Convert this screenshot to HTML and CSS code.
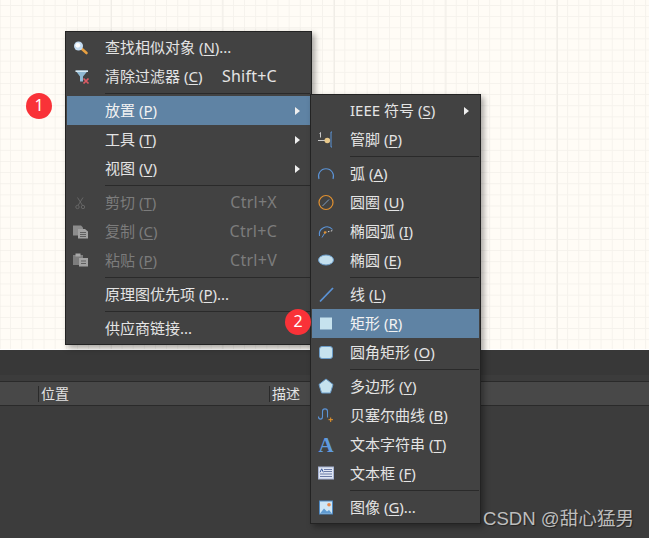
FILE: index.html
```html
<!DOCTYPE html>
<html lang="zh">
<head>
<meta charset="utf-8">
<title>Menu</title>
<link rel="stylesheet" href="styles.css">
</head>
<body>
<div class="app">
  <div class="canvas"></div>
  <div class="panel">
    <div class="panel-strip"></div>
    <div class="table-head">
      <div class="col col-a"></div>
      <div class="col col-b">位置</div>
      <div class="col col-c">描述</div>
    </div>
    <div class="table-body"></div>
  </div>

  <div class="menu menu-main">
    <div class="row">
      <span class="icon"><svg viewBox="0 0 20 20"><path d="M11 11l4.500 4" stroke="#e8a040" stroke-width="2.600" stroke-linecap="round"/><circle cx="7.500" cy="8" r="4.500" fill="#c4dcf2"/><circle cx="6.800" cy="7.300" r="2.400" fill="#fff"/></svg></span>
      <span class="label">查找相似对象 (<u>N</u>)...</span>
    </div>
    <div class="row">
      <span class="icon"><svg viewBox="0 0 20 20"><path d="M4.500 3.500h12.500l-5 6v5h-3v-5z" fill="#8fb8d2"/><path d="M4.500 3.500h12.500v1.500H4.500z" fill="#d9ebf5"/><path d="M12.500 11.500l5 5M17.500 11.500l-5 5" stroke="#dd5a64" stroke-width="1.700"/></svg></span>
      <span class="label">清除过滤器 (<u>C</u>)</span>
      <span class="keys">Shift+C</span>
    </div>
    <div class="sep"></div>
    <div class="row active">
      <span class="icon"></span>
      <span class="label">放置 (<u>P</u>)</span>
      <span class="arrow"></span>
    </div>
    <div class="row">
      <span class="icon"></span>
      <span class="label">工具 (<u>T</u>)</span>
      <span class="arrow"></span>
    </div>
    <div class="row">
      <span class="icon"></span>
      <span class="label">视图 (<u>V</u>)</span>
      <span class="arrow"></span>
    </div>
    <div class="sep"></div>
    <div class="row disabled">
      <span class="icon"><svg viewBox="0 0 20 20"><path d="M6.500 4.500l5 8M12 4.500l-5 8" stroke="#666" fill="none"/><circle cx="6.500" cy="14" r="1.700" stroke="#666" fill="none"/><circle cx="12" cy="14" r="1.700" stroke="#666" fill="none"/></svg></span>
      <span class="label">剪切 (<u>T</u>)</span>
      <span class="keys">Ctrl+X</span>
    </div>
    <div class="row disabled">
      <span class="icon"><svg viewBox="0 0 20 20"><path d="M2 3.500h8l2 2v8H2z" fill="#8c8c8c"/><path d="M7 7h7l3 2.500v7H7z" fill="#a2a2a2"/><path d="M9 10.500h6M9 12.500h6M9 14.500h6" stroke="#606060"/></svg></span>
      <span class="label">复制 (<u>C</u>)</span>
      <span class="keys">Ctrl+C</span>
    </div>
    <div class="row disabled">
      <span class="icon"><svg viewBox="0 0 20 20"><path d="M2 4h10v10H2z" fill="#7d7d7d"/><path d="M4.500 2.500h5v3h-5z" fill="#a8a8a8"/><path d="M8 7h9v8.500H8z" fill="#a2a2a2"/><path d="M10 10h5M10 12.500h5" stroke="#606060"/></svg></span>
      <span class="label">粘贴 (<u>P</u>)</span>
      <span class="keys">Ctrl+V</span>
    </div>
    <div class="sep"></div>
    <div class="row">
      <span class="icon"></span>
      <span class="label">原理图优先项 (<u>P</u>)...</span>
    </div>
    <div class="sep"></div>
    <div class="row">
      <span class="icon"></span>
      <span class="label">供应商链接...</span>
    </div>
  </div>

  <div class="menu menu-sub">
    <div class="row">
      <span class="icon"></span>
      <span class="label">IEEE 符号 (<u>S</u>)</span>
      <span class="arrow"></span>
    </div>
    <div class="row">
      <span class="icon"><svg viewBox="0 0 20 20"><path d="M2 10.500h8" stroke="#c8c8c8"/><path d="M4.500 2.500v5M3.500 3.500l1-1" stroke="#c8c8c8" fill="none"/><circle cx="11.300" cy="10.500" r="2.800" fill="#e8c88a"/><path d="M16 2h-1v15h1" stroke="#5b93d6" fill="none"/></svg></span>
      <span class="label">管脚 (<u>P</u>)</span>
    </div>
    <div class="sep"></div>
    <div class="row">
      <span class="icon"><svg viewBox="0 0 20 20"><path d="M3 15A7.500 7.500 0 1 1 17 15" stroke="#5b93d6" stroke-width="1.100" fill="none"/></svg></span>
      <span class="label">弧 (<u>A</u>)</span>
    </div>
    <div class="row">
      <span class="icon"><svg viewBox="0 0 20 20"><circle cx="10" cy="9.500" r="7" stroke="#e09030" stroke-width="1.200" fill="none"/><path d="M6.500 13l6.500-6.500" stroke="#7d9cc0"/></svg></span>
      <span class="label">圆圈 (<u>U</u>)</span>
    </div>
    <div class="row">
      <span class="icon"><svg viewBox="0 0 20 20"><path d="M3.500 14A7.500 7.500 0 0 1 16.500 7.500" stroke="#5b93d6" stroke-width="1.100" fill="none"/><path d="M9 10.500l8-2" stroke="#d8d8d8" stroke-dasharray="1.500 1.500"/><path d="M6 15.500l3-5" stroke="#5b93d6"/><circle cx="9" cy="10.500" r="1.200" fill="#e09030"/></svg></span>
      <span class="label">椭圆弧 (<u>I</u>)</span>
    </div>
    <div class="row">
      <span class="icon"><svg viewBox="0 0 20 20"><ellipse cx="10" cy="9" rx="7.500" ry="5" fill="#c4e0ee" stroke="#6b9cc8"/></svg></span>
      <span class="label">椭圆 (<u>E</u>)</span>
    </div>
    <div class="sep"></div>
    <div class="row">
      <span class="icon"><svg viewBox="0 0 20 20"><path d="M4 16.500L17 3" stroke="#5b93d6" stroke-width="1.800"/></svg></span>
      <span class="label">线 (<u>L</u>)</span>
    </div>
    <div class="row active">
      <span class="icon"><svg viewBox="0 0 20 20"><rect x="4" y="3.500" width="12" height="12" fill="#c6e2ee"/></svg></span>
      <span class="label">矩形 (<u>R</u>)</span>
    </div>
    <div class="row">
      <span class="icon"><svg viewBox="0 0 20 20"><rect x="3.500" y="3.500" width="13" height="12" rx="2.500" fill="#c6e2ee" stroke="#6b9cc8"/></svg></span>
      <span class="label">圆角矩形 (<u>O</u>)</span>
    </div>
    <div class="sep"></div>
    <div class="row">
      <span class="icon"><svg viewBox="0 0 20 20"><path d="M10 2l7 5.500-2.600 8.500H5.600L3 7.500z" fill="#c6e2ee" stroke="#6b9cc8"/></svg></span>
      <span class="label">多边形 (<u>Y</u>)</span>
    </div>
    <div class="row">
      <span class="icon"><svg viewBox="0 0 20 20"><path d="M2.500 10.500c0 3.500 4 3.500 4 0V5.500c0-3.500 5-3.500 5 0v6" stroke="#5b93d6" stroke-width="1.100" fill="none"/><path d="M14.700 11.500v4.500M12.500 13.700h4.500" stroke="#e8962a"/></svg></span>
      <span class="label">贝塞尔曲线 (<u>B</u>)</span>
    </div>
    <div class="row">
      <span class="icon"><span class="glyph-a">A</span></span>
      <span class="label">文本字符串 (<u>T</u>)</span>
    </div>
    <div class="row">
      <span class="icon"><svg viewBox="0 0 20 20"><rect x="2.500" y="3" width="15" height="12" fill="#dfe6f3" stroke="#a8b4d4"/><path d="M8 5.500h8M8 7.500h8M4 10h12M4 12.500h12" stroke="#6a7aa6"/><path d="M4 8.300l1.700-3.500 1.700 3.500" stroke="#3c5a9a" fill="none"/></svg></span>
      <span class="label">文本框 (<u>F</u>)</span>
    </div>
    <div class="sep"></div>
    <div class="row">
      <span class="icon"><svg viewBox="0 0 20 20"><rect x="3.500" y="3" width="13" height="13" fill="#cfe6f5" stroke="#4f8ac4"/><circle cx="13" cy="6.800" r="1.800" fill="#e8884a"/><path d="M4 15.500l4-5 3 3 2-1.500 3 3.500z" fill="#5f9ad0"/></svg></span>
      <span class="label">图像 (<u>G</u>)...</span>
    </div>
  </div>

  <span class="badge badge-one">1</span>
  <span class="badge badge-two">2</span>
  <span class="watermark">CSDN @甜心猛男</span>
</div>
</body>
</html>
```

FILE: styles.css
```css
* { box-sizing: border-box; }
html, body { margin: 0; padding: 0; }
body {
  width: 649px;
  height: 538px;
  overflow: hidden;
  font-family: "Noto Sans", "Noto Sans CJK SC", sans-serif;
  background: #3c3c3c;
}
.app {
  position: relative;
  width: 649px;
  height: 538px;
  display: flex;
  flex-direction: column;
}
.canvas {
  height: 350px;
  background-color: #fffcf6;
  background-image:
    linear-gradient(to right, #f0ede7 1px, transparent 1px),
    linear-gradient(to right, #f5f2ec 1px, transparent 1px),
    linear-gradient(to bottom, #f5f2ec 1px, transparent 1px);
  background-size: 111.5px 100%, 11.15px 100%, 100% 11.15px;
  background-position: -0.5px 0, -1px 0, 0 5px;
  border-bottom: 1px solid #fff;
}
.panel {
  flex: 1;
  display: flex;
  flex-direction: column;
  background: #3c3c3c;
}
.panel-strip {
  height: 31px;
  background: linear-gradient(to bottom, #383838 0, #383838 25px, #3c3c3c 25px);
}
.table-head {
  height: 25px;
  display: flex;
  background: #484848;
  border-top: 1px solid #2a2a2a;
  border-bottom: 1px solid #2a2a2a;
  color: #e2e2e2;
  font-size: 14px;
  line-height: 23px;
}
.col { padding-left: 2px; height: 23px; white-space: nowrap; }
.col-a { width: 38px; }
.col-b { width: 231px; border-left: 1px solid #2a2a2a; height: 16px; margin-top: 4px; line-height: 16px; }
.col-c { width: 60px; border-left: 1px solid #2a2a2a; height: 16px; margin-top: 4px; line-height: 16px; }
.table-body { flex: 1; }

.menu {
  position: absolute;
  background: #424242;
  border: 1px solid #232323;
  padding: 1px;
  box-shadow: 3px 3px 6px rgba(0, 0, 0, .35);
  color: #e4e4e4;
  font-size: 15px;
}
.menu-main { left: 65px; top: 31px; width: 247px; }
.menu-sub { left: 310px; top: 94px; width: 171px; }
.row {
  height: 29px;
  display: flex;
  align-items: center;
  white-space: nowrap;
}
.row.active { background: #5f83a4; color: #f2f2f2; }
.row.disabled { color: #7c7c7c; }
.row u { text-underline-offset: 2px; text-decoration-thickness: 1px; }
.icon {
  flex: none;
  width: 38px;
  height: 20px;
  padding-left: 4px;
  display: flex;
}
.icon svg { width: 20px; height: 20px; display: block; }
.glyph-a {
  width: 20px;
  text-align: center;
  font-family: "Liberation Serif", serif;
  font-weight: bold;
  font-size: 21px;
  line-height: 20px;
  color: #5f9ade;
}
.label { flex: 1; padding-bottom: 2px; }
.keys {
  flex: none;
  margin-right: 33px;
  padding-bottom: 2px;
  font-size: 16px;
  letter-spacing: .25px;
}
.arrow {
  flex: none;
  width: 0;
  height: 0;
  margin-right: 10px;
  border-left: 5px solid #efefef;
  border-top: 4px solid transparent;
  border-bottom: 4px solid transparent;
}
.sep {
  height: 5px;
  margin-left: 38px;
  background: linear-gradient(to bottom, transparent 2px, #2a2a2a 2px, #2a2a2a 3px, transparent 3px);
}
.badge {
  position: absolute;
  width: 26px;
  height: 26px;
  border-radius: 50%;
  background: #f93238;
  color: #fff;
  font-size: 16px;
  line-height: 24px;
  text-align: center;
}
.badge-one { left: 26px; top: 93px; }
.badge-two { left: 285px; top: 309px; }
.watermark {
  position: absolute;
  left: 483px;
  top: 506px;
  font-family: "Liberation Sans", "Noto Sans CJK SC", sans-serif;
  font-size: 18.6px;
  line-height: 26px;
  color: #bdbdbd;
  white-space: nowrap;
  text-shadow: 1px 1px 1px rgba(0, 0, 0, .4);
}
```
